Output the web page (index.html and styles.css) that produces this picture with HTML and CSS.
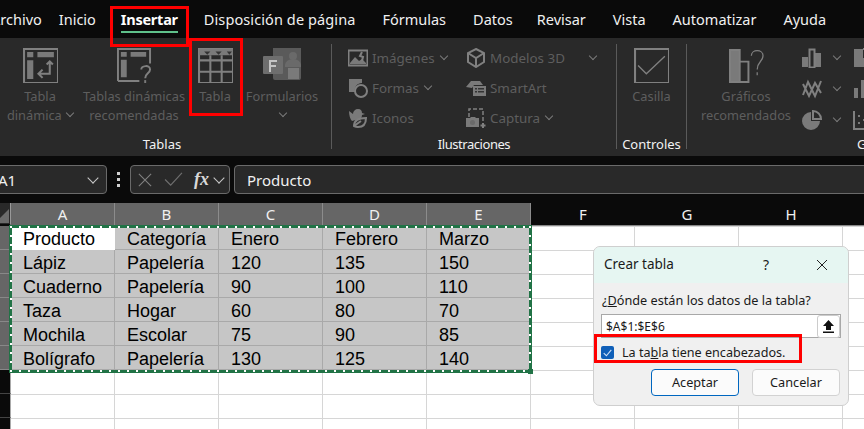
FILE: index.html
```html
<!DOCTYPE html>
<html lang="es">
<head>
    <meta charset="UTF-8">
    <title>Crear tabla</title>
    <link rel="stylesheet" href="styles.css">
</head>
<body>
<div class="page">
    <div class="tabs">
        <span class="tab tab-first">Archivo</span>
        <span class="tab">Inicio</span>
        <span class="tab tab-on">Insertar</span>
        <span class="tab tab-disp">Disposición de página</span>
        <span class="tab">Fórmulas</span>
        <span class="tab tab-datos">Datos</span>
        <span class="tab">Revisar</span>
        <span class="tab">Vista</span>
        <span class="tab">Automatizar</span>
        <span class="tab">Ayuda</span>
    </div>

    <div class="ribbon">
        <div class="group group-tablas">
            <div class="group-body">
                <div class="big b-pivot">
                    <svg class="ico" viewBox="0 0 34 34"><path class="ln" d="M1 1h33v33H1z"/><path class="fl" d="M4 4h6v5H4zM14 4h16v5H14zM4 12h6v18H4z"/><path class="ln" d="M26 13v12H16M23 16l3-3 3 3M19 21l-4 4 4 4" /></svg>
                    <span>Tabla<br>dinámica <i class="chev"></i></span>
                </div>
                <div class="big b-rec">
                    <svg class="ico" viewBox="0 0 36 36"><path class="ln" d="M1 34V1h33v15M1 34h22"/><path class="fl" d="M4 4h6v5H4zM14 4h16v5H14zM4 12h6v18H4z"/><path class="ln" d="M25 22c0-4 9-5 9 0 0 4-5 4-5 9"/><path class="fl" d="M28 33h2v3h-2z"/></svg>
                    <span>Tablas dinámicas<br>recomendadas</span>
                </div>
                <div class="big b-table">
                    <svg class="ico" viewBox="0 0 34 34"><path class="ln" d="M1 1h33v33H1zM1 12h33M1 23h33M12 7v27M23 7v27"/><path class="fl" d="M1 1h33v6H1z"/><path class="dk" d="M6 3.500h6l-3 3zM17 3.500h6l-3 3zM28 3.500h5l-2.500 3z"/></svg>
                    <span>Tabla</span>
                </div>
                <div class="big b-forms">
                    <svg class="ico ico-forms" viewBox="0 0 38 34"><path class="fl2" d="M10 0h28v30a2 2 0 0 1-2 2H12a2 2 0 0 1-2-2z"/><circle class="dk2" cx="30" cy="8" r="4"/><path class="dk2" d="M22 17a8 6 0 0 1 16 0v2H22z"/><path class="fl" d="M25 20h11v11H25z"/><path class="fl3" d="M1 8h18a1 1 0 0 1 1 1v16a1 1 0 0 1-1 1H1a1 1 0 0 1-1-1V9a1 1 0 0 1 1-1z"/><path class="fw" d="M6 12h8v2H8v3h5v2H8v5H6z"/></svg>
                    <span>Formularios<br><i class="chev"></i></span>
                </div>
            </div>
            <div class="group-name">Tablas</div>
        </div>
        <div class="sep"></div>

        <div class="group group-ilus">
            <div class="group-body small-cols">
                <div class="small-col col-a">
                    <div class="small"><svg class="ico-s" viewBox="0 0 20 16"><path class="ln" d="M.500.500h19v15H.500z"/><path class="fl" d="M2 13l5-6 4 4 3-2 4 4v1H2z"/><path class="ln" d="M14 2l-2 4 3 1-1 4"/></svg>Imágenes<i class="chev"></i></div>
                    <div class="small"><svg class="ico-s" viewBox="0 0 20 20"><path class="fl" d="M1 1h13v4a7 7 0 0 0-7 9H1z"/><circle class="ln2" cx="13" cy="13" r="6"/></svg>Formas<i class="chev"></i></div>
                    <div class="small"><svg class="ico-s" viewBox="0 0 20 20"><path class="fl" d="M1 3l4 3a5 5 0 0 1 5-5c3 0 4 2 4 4l3 1-3 1c0 2-1 4-3 4L4 13C2 11 1 7 1 3z"/><path class="ln" d="M6 18c0-5 4-8 12-8 0 6-3 9-8 9-2 0-3-.500-4-1zM6 18l7-5"/></svg>Iconos</div>
                </div>
                <div class="small-col col-b">
                    <div class="small"><svg class="ico-s" viewBox="0 0 20 20"><path class="ln" d="M10 1l8 4v9l-8 5-8-5V5zM2 5l8 5 8-5M10 10v9"/></svg>Modelos 3D<i class="chev chev-far"></i></div>
                    <div class="small"><svg class="ico-s" viewBox="0 0 20 16"><path class="fl" d="M0 7l5-6h9l3 4H8L6 8z"/><path class="fl" d="M7 6h13v10H7z"/><path class="dk" d="M9 8h2v1.500H9zM12 8h6v1.500h-6zM9 11h2v1.500H9zM12 11h6v1.500h-6z"/></svg>SmartArt</div>
                    <div class="small"><svg class="ico-s" viewBox="0 0 20 20"><path class="dash" d="M3 9V1h14v13"/><path class="fl" d="M0 10h4l1-1h4l1 1h3v9H0z"/><circle class="dk2" cx="6.500" cy="14.500" r="2.500"/><path class="ln" d="M17 15v5M14.500 17.500h5"/></svg>Captura<i class="chev"></i></div>
                </div>
            </div>
            <div class="group-name">Ilustraciones</div>
        </div>
        <div class="sep"></div>

        <div class="group group-ctrl">
            <div class="group-body">
                <div class="big b-check">
                    <svg class="ico" viewBox="0 0 34 34"><path class="ln" d="M1 1h33v33H1z"/><path class="thin" d="M4 17l8 8L30 8"/></svg>
                    <span>Casilla</span>
                </div>
            </div>
            <div class="group-name">Controles</div>
        </div>
        <div class="sep"></div>

        <div class="group group-chart">
            <div class="group-body">
                <div class="big b-recchart">
                    <svg class="ico" viewBox="0 0 36 34"><path class="fl" d="M1 1h10v33H1z"/><path class="ln" d="M1 1h10v33H1zM11 13h9v21h-9z"/><path class="thin" d="M23 7c0-7 12-7 12 0 0 6-6 6-6 14M29 24v3"/></svg>
                    <span>Gráficos<br>recomendados</span>
                </div>
                <div class="chart-col">
                    <div class="chart-btn"><svg class="ico-s" viewBox="0 0 20 20"><path class="fl" d="M0 9h6v10H0zM13 5h6v14h-6z"/><path class="ln" d="M7.500 1.500h5v18h-5z"/></svg><i class="chev"></i></div>
                    <div class="chart-btn"><svg class="ico-s" viewBox="0 0 20 20"><path class="ln" d="M1 16L6 3l7 14 6-15M1 5l6 12 6-13 6 10"/></svg><i class="chev"></i></div>
                    <div class="chart-btn"><svg class="ico-s" viewBox="0 0 20 20"><path class="fl" d="M9 2a9 9 0 1 0 9 9h-9z"/><path class="ln" d="M11 1a8 8 0 0 1 8 8h-8z"/></svg><i class="chev"></i></div>
                </div>
                <div class="chart-col">
                    <div class="chart-btn"><svg class="ico-s" viewBox="0 0 20 20"><path class="fl" d="M1 1h9v18H1zM10 10h9v9h-9z"/><path class="ln" d="M10 1h9v9"/></svg></div>
                    <div class="chart-btn"><svg class="ico-s" viewBox="0 0 20 20"><path class="fl" d="M1 9h4v10H1zM8 1h4v18H8zM15 6h4v13h-4z"/></svg></div>
                    <div class="chart-btn"><svg class="ico-s" viewBox="0 0 20 20"><path class="ln" d="M1 1v18h18"/><path class="fl" d="M5 5h2v2H5zM5 12h2v2H5zM10 9h2v2h-2zM15 8h2v2h-2z"/></svg></div>
                </div>
            </div>
            <div class="group-name">Gráficos</div>
        </div>
    </div>

    <div class="fbar">
        <div class="namebox"><span>A1</span><i class="chev chev-light"></i></div>
        <div class="dots"><b></b><b></b><b></b></div>
        <div class="fnbox">
            <svg class="fn-x" viewBox="0 0 16 16"><path d="M1 1l14 14M15 1L1 15"/></svg>
            <svg class="fn-ok" viewBox="0 0 20 16"><path d="M1 8l6 6L19 1"/></svg>
            <span class="fx">fx</span>
            <i class="chev chev-light"></i>
        </div>
        <div class="formula">Producto</div>
    </div>

    <div class="sheet">
        <div class="corner"></div>
        <div class="ch ch-sel">A</div><div class="ch ch-sel">B</div><div class="ch ch-sel">C</div><div class="ch ch-sel">D</div><div class="ch ch-sel">E</div>
        <div class="ch">F</div><div class="ch">G</div><div class="ch">H</div><div class="ch"></div>

        <div class="rh rh-sel"></div><div class="c c-active">Producto</div><div class="c">Categoría</div><div class="c">Enero</div><div class="c">Febrero</div><div class="c">Marzo</div>
        <div class="rh rh-sel"></div><div class="c">Lápiz</div><div class="c">Papelería</div><div class="c">120</div><div class="c">135</div><div class="c">150</div>
        <div class="rh rh-sel"></div><div class="c">Cuaderno</div><div class="c">Papelería</div><div class="c">90</div><div class="c">100</div><div class="c">110</div>
        <div class="rh rh-sel"></div><div class="c">Taza</div><div class="c">Hogar</div><div class="c">60</div><div class="c">80</div><div class="c">70</div>
        <div class="rh rh-sel"></div><div class="c">Mochila</div><div class="c">Escolar</div><div class="c">75</div><div class="c">90</div><div class="c">85</div>
        <div class="rh rh-sel"></div><div class="c">Bolígrafo</div><div class="c">Papelería</div><div class="c">130</div><div class="c">125</div><div class="c">140</div>
        <div class="rh"></div>
        <div class="rh"></div>
        <div class="rh"></div>

        <div class="ants"><div class="ants-dash"></div><div class="ants-grip"></div></div>
    </div>

    <div class="dialog">
        <div class="dlg-head">
            <span class="dlg-title">Crear tabla</span>
            <span class="dlg-help">?</span>
            <svg class="dlg-close" viewBox="0 0 12 12"><path d="M1 1l10 10M11 1L1 11"/></svg>
        </div>
        <div class="dlg-body">
            <div class="dlg-label">¿<u>D</u>ónde están los datos de la tabla?</div>
            <div class="dlg-input">
                <span>$A$1:$E$6</span>
                <div class="dlg-pick"><svg viewBox="0 0 11 13"><path d="M5.500 0L11 6H8v4H3V6H0zM0 11.500h11V13H0z"/></svg></div>
            </div>
            <div class="dlg-check">
                <div class="box"><svg viewBox="0 0 12 12"><path d="M2.500 6.500l2.500 2.500 4.500-5.500"/></svg></div>
                <span>La ta<u>b</u>la tiene encabezados.</span>
            </div>
            <div class="dlg-btns">
                <div class="btn btn-main">Aceptar</div>
                <div class="btn">Cancelar</div>
            </div>
        </div>
    </div>

    <div class="mark mark-tab"></div>
    <div class="mark mark-table"></div>
    <div class="mark mark-check"></div>
</div>
</body>
</html>
```

FILE: styles.css
```css
* { box-sizing: border-box; }
html, body { margin: 0; height: 100%; overflow: hidden; background: #0a0a0a; }
body { font-family: "Noto Sans", "Open Sans", sans-serif; }
.page { position: relative; width: 864px; height: 429px; overflow: hidden; }

/* tabs */
.tabs { display: flex; height: 38px; align-items: center; gap: 27px; color: #f0f0f0; font-size: 14.5px; white-space: nowrap; }
.tab-first { margin-left: -9px; margin-right: -10px; }
.tab-on { position: relative; font-weight: 700; color: #fff; margin: 0 -1px 0 -2px; letter-spacing: -.25px; }
.tab-on::after { content: ""; position: absolute; left: 0; right: 0; bottom: -4px; height: 2px; background: #5fc08a; }
.tab-disp { letter-spacing: .1px; }
.tab-datos { margin-right: -3px; }

/* ribbon */
.ribbon { display: flex; height: 118px; background: #292929; overflow: hidden; color: #5e5e5e; font-size: 12.8px; }
.sep { width: 1px; height: 105px; margin-top: 6px; background: #5a5a5a; flex: none; }
.group { flex: none; display: flex; flex-direction: column; }
.group-body { display: flex; height: 95px; }
.group-name { color: #f2f2f2; font-size: 13px; text-align: center; line-height: 18px; margin-top: 2px; }
.group-tablas { width: 331px; padding-right: 7px; }
.group-ilus { width: 284px; }
.group-ilus .group-name { letter-spacing: -.45px; }
.group-ctrl { width: 69px; }
.group-chart { width: 390px; }

.big { flex: none; display: flex; flex-direction: column; align-items: center; padding-top: 10px; text-align: center; line-height: 19px; white-space: nowrap; }
.big .ico { display: block; width: 35px; height: 35px; margin-bottom: 4px; }
.b-pivot { width: 80px; }
.b-rec { width: 108px; }
.b-table { width: 54px; }
.b-forms { width: 80px; }
.b-forms .ico-forms { width: 38px; height: 34px; margin-bottom: 5px; }
.b-check { width: 69px; }
.b-recchart { width: 118px; margin-right: -3px; }

.small-cols { padding: 4.5px 0 0 16px; font-size: 13.4px; }
.small-col { display: flex; flex-direction: column; }
.col-a { width: 118px; }
.col-b { width: 140px; }
.small { height: 31px; display: flex; align-items: center; white-space: nowrap; }
.small .chev { margin-left: 6px; }
.ico-s { width: 20px; height: 20px; margin-right: 4px; flex: none; }
.chart-col { flex: none; width: 51px; padding-top: 4px; }
.chart-btn { height: 31px; display: flex; align-items: center; gap: 6px; }

.ln { fill: none; stroke: #808080; stroke-width: 2; }
.ln2 { fill: #292929; stroke: #808080; stroke-width: 2; }
.thin { fill: none; stroke: #808080; stroke-width: 1.3; }
.dash { fill: none; stroke: #808080; stroke-width: 1.5; stroke-dasharray: 4 2; }
.fl { fill: #7a7a7a; }
.fl2 { fill: #5a5a5a; }
.fl3 { fill: #6e6e6e; }
.dk { fill: #333; }
.dk2 { fill: #6a6a6a; }
.fw { fill: #c4c4c4; }

.chev { display: inline-block; width: 6px; height: 6px; border-right: 1px solid #7a7a7a; border-bottom: 1px solid #7a7a7a; transform: rotate(45deg); margin: 0 0 4px 2px; }
.small .chev-far { margin-left: 25px; }
.chev-light { border-color: #c8c8c8; width: 8px; height: 8px; }

/* formula bar */
.fbar { display: flex; height: 47px; padding-top: 9px; padding-bottom: 9px; align-items: stretch; }
.namebox { width: 117px; margin-left: -10px; flex: none; background: #292929; border: 1px solid #6a6a6a; border-radius: 4px; display: flex; justify-content: space-between; align-items: center; padding: 0 9px 0 7px; color: #f0f0f0; font-size: 15px; }
.dots { width: 23px; flex: none; display: flex; flex-direction: column; align-items: center; justify-content: center; gap: 3px; }
.dots b { width: 3px; height: 3px; background: #d0d0d0; }
.fnbox { width: 100px; flex: none; background: #292929; border: 1px solid #6a6a6a; border-radius: 4px; display: flex; align-items: center; padding-left: 7px; }
.fn-x { width: 14px; height: 14px; fill: none; stroke: #808080; stroke-width: 1.3; margin-right: 12px; }
.fn-ok { width: 19px; height: 15px; fill: none; stroke: #6e6e6e; stroke-width: 1.3; margin-right: 11px; }
.fx { color: #d8d8d8; font: italic 700 18px "Liberation Serif", serif; width: 17px; }
.fnbox .chev { margin: 0 0 4px 4px; }
.formula { flex: 1; margin-left: 4px; margin-right: -6px; background: #292929; border: 1px solid #6a6a6a; border-radius: 4px; color: #f0f0f0; font-size: 15px; padding-left: 12px; display: flex; align-items: center; }

/* sheet */
.sheet { position: relative; display: grid; grid-template-columns: 11px repeat(8, 104px) 22px; grid-template-rows: 23px repeat(9, 24px); background-color: #fff; background-image: linear-gradient(#d6d6d6 1px, transparent 1px), linear-gradient(90deg, #d6d6d6 1px, transparent 1px); background-size: 100% 24px, 104px 100%; background-position: 0 23px, 10px 0; height: 226px; }
.corner { background: #292929; border-right: 1px solid #999; border-bottom: 2px solid #0a0a0a; position: relative; }
.corner::after { content: ""; position: absolute; right: 1px; bottom: 1px; border: 7px solid transparent; border-right-color: #6b6b6b; border-bottom-color: #6b6b6b; }
.ch { background: #0a0a0a; color: #f0f0f0; font-size: 15px; text-align: center; line-height: 23px; border-bottom: 1px solid #888; }
.ch-sel { background: #666; border-right: 1px solid #8c8c8c; border-bottom: 0; }
.rh { grid-column: 1; background: #0a0a0a; border-right: 1px solid #aaa; border-bottom: 1px solid #444; }
.rh-sel { background: #666; border-bottom-color: #888; }
.c { background: #c6c6c6; color: #000; font: 18px/26px "Liberation Sans", Arial, sans-serif; padding-left: 12px; border-right: 1px solid #a9a9a9; border-bottom: 1px solid #a9a9a9; white-space: nowrap; overflow: hidden; }
.c-active { background: #fff; border: 0; }

.ants { position: absolute; left: 9px; top: 22px; width: 523px; height: 148px; border: 3px solid #217346; }
.ants-dash { position: absolute; inset: -2px; background-image: repeating-linear-gradient(90deg, #fff 0 2px, transparent 2px 9px), repeating-linear-gradient(90deg, #fff 0 2px, transparent 2px 9px), repeating-linear-gradient(#fff 0 2px, transparent 2px 9px), repeating-linear-gradient(#fff 0 2px, transparent 2px 9px); background-size: 100% 2px, 100% 2px, 2px 100%, 2px 100%; background-position: 0 0, 0 100%, 0 0, 100% 0; background-repeat: no-repeat; }
.ants-grip { position: absolute; right: -4px; bottom: -4px; width: 5px; height: 5px; background: #217346; }

/* dialog */
.dialog { position: absolute; left: 593px; top: 246px; width: 256px; height: 160px; background: #f0f0f0; border: 1px solid #cfcfcf; border-radius: 7px; overflow: hidden; color: #1a1a1a; font-size: 12.7px; }
.dlg-head { height: 36px; background: #e6f6f2; display: flex; align-items: center; padding-left: 10px; }
.dlg-title { width: 159px; font-size: 13.5px; padding-bottom: 2px; }
.dlg-help { width: 53px; font-size: 14px; padding-bottom: 2px; }
.dlg-close { width: 12px; height: 12px; fill: none; stroke: #222; stroke-width: 1; }
.dlg-body { padding: 7px 7px 0; display: flex; flex-direction: column; }
.dlg-label { height: 24px; padding-left: 1px; line-height: 20px; }
.dlg-input { height: 24px; width: 240px; background: #fff; border: 1px solid #a8a8a8; display: flex; align-items: center; justify-content: space-between; padding-left: 4px; font-size: 12px; }
.dlg-pick { width: 23px; height: 23px; border: 1px solid #ccc; border-radius: 3px; background: #fff; display: flex; align-items: center; justify-content: center; }
.dlg-pick svg { width: 11px; height: 13px; fill: #111; }
.dlg-check { display: flex; align-items: center; height: 24px; margin-top: 2px; font-size: 12.6px; }
.box { width: 13px; height: 13px; background: #0f5fb8; border-radius: 2px; margin-right: 8px; }
.box svg { display: block; fill: none; stroke: #cfe0f5; stroke-width: 1; }
.dlg-btns { display: flex; justify-content: flex-end; gap: 13px; margin-top: 5px; padding-right: 1px; }
.btn { width: 88px; height: 27px; background: #fbfbfb; border: 1px solid #d2d2d2; border-radius: 4px; text-align: center; line-height: 25px; }
.btn-main { border-color: #0067c0; }

/* red marks */
.mark { position: absolute; border: 3px solid #f00; }
.mark-tab { left: 110px; top: 6px; width: 79px; height: 41px; }
.mark-table { left: 189px; top: 38px; width: 54px; height: 78px; }
.mark-check { left: 594px; top: 334px; width: 208px; height: 29px; }
```
